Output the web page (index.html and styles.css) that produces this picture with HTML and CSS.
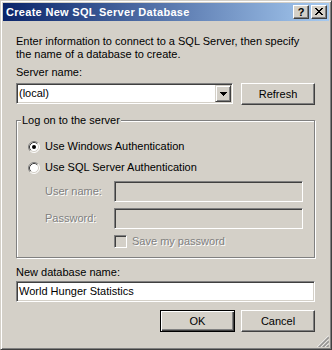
FILE: index.html
```html
<!DOCTYPE html>
<html>
<head>
<meta charset="utf-8">
<link rel="stylesheet" href="styles.css">
</head>
<body>
<div class="window">
  <div class="titlebar">
    <div class="title">Create New SQL Server Database</div>
    <div class="tbtns">
      <div class="tbtn help">?</div>
      <div class="tbtn">
        <svg width="8" height="7" viewBox="0 0 8 7" shape-rendering="crispEdges"><path d="M0 0h2v1h-2zM6 0h2v1h-2zM1 1h2v1h-2zM5 1h2v1h-2zM2 2h4v1h-4zM3 3h2v1h-2zM2 4h4v1h-4zM1 5h2v1h-2zM5 5h2v1h-2zM0 6h2v1h-2zM6 6h2v1h-2z" fill="#000"/></svg>
      </div>
    </div>
  </div>
  <div class="content">
    <p class="intro">Enter information to connect to a SQL Server, then specify the name of a database to create.</p>
    <div class="label">Server name:</div>
    <div class="server-row">
      <div class="combo">
        <div class="combo-text">(local)</div>
        <div class="drop-btn">
          <svg width="7" height="4" viewBox="0 0 7 4" shape-rendering="crispEdges"><path d="M0 0h7v1h-7zM1 1h5v1h-5zM2 2h3v1h-3zM3 3h1v1h-1z" fill="#000"/></svg>
        </div>
      </div>
      <div class="btn refresh">Refresh</div>
    </div>
    <fieldset class="group">
      <legend class="legend">Log on to the server</legend>
      <div class="radio-row first">
        <svg class="radio" width="12" height="12" viewBox="0 0 12 12">
          <circle cx="6" cy="6" r="5" fill="#fff"/>
          <path d="M2.11 9.89A5.5 5.5 0 0 1 9.89 2.11" fill="none" stroke="#808080"/>
          <path d="M9.89 2.11A5.5 5.5 0 0 1 2.11 9.89" fill="none" stroke="#fff"/>
          <path d="M2.82 9.18A4.5 4.5 0 0 1 9.18 2.82" fill="none" stroke="#404040"/>
          <path d="M9.18 2.82A4.5 4.5 0 0 1 2.82 9.18" fill="none" stroke="#D4D0C8"/>
          <circle cx="6" cy="6" r="2" fill="#000"/>
        </svg>
        <span>Use Windows Authentication</span>
      </div>
      <div class="radio-row second">
        <svg class="radio" width="12" height="12" viewBox="0 0 12 12">
          <circle cx="6" cy="6" r="5" fill="#fff"/>
          <path d="M2.11 9.89A5.5 5.5 0 0 1 9.89 2.11" fill="none" stroke="#808080"/>
          <path d="M9.89 2.11A5.5 5.5 0 0 1 2.11 9.89" fill="none" stroke="#fff"/>
          <path d="M2.82 9.18A4.5 4.5 0 0 1 9.18 2.82" fill="none" stroke="#404040"/>
          <path d="M9.18 2.82A4.5 4.5 0 0 1 2.82 9.18" fill="none" stroke="#D4D0C8"/>
        </svg>
        <span>Use SQL Server Authentication</span>
      </div>
      <div class="field-row user">
        <div class="field-label disabled">User name:</div>
        <div class="textbox disabled-box"></div>
      </div>
      <div class="field-row pass">
        <div class="field-label disabled">Password:</div>
        <div class="textbox disabled-box"></div>
      </div>
      <div class="check-row">
        <div class="checkbox"></div>
        <span class="disabled">Save my password</span>
      </div>
    </fieldset>
    <div class="label db-label">New database name:</div>
    <div class="textbox db-input">World Hunger Statistics</div>
    <div class="button-row">
      <div class="btn default">OK</div>
      <div class="btn cancel">Cancel</div>
    </div>
  </div>
  <svg class="grip" width="12" height="12" viewBox="0 0 12 12">
    <path d="M0.5 12L12 0.5M4.5 12L12 4.5M8.5 12L12 8.5" stroke="#fff" fill="none"/>
    <path d="M1.5 12L12 1.5M2.5 12L12 2.5M5.5 12L12 5.5M6.5 12L12 6.5M9.5 12L12 9.5M10.5 12L12 10.5" stroke="#808080" fill="none"/>
  </svg>
</div>
</body>
</html>
```

FILE: styles.css
```css
html, body {
  margin: 0;
  padding: 0;
  background: #D4D0C8;
}

.window {
  position: relative;
  width: 332px;
  height: 350px;
  box-sizing: border-box;
  background: #D4D0C8;
  border: 1px solid;
  border-color: #D4D0C8 #404040 #404040 #D4D0C8;
  box-shadow: inset 1px 1px #fff, inset -1px -1px #808080;
  padding: 2px;
  font-family: "Liberation Sans", Arial, sans-serif;
  font-size: 11px;
  color: #000;
}

.titlebar {
  height: 18px;
  display: flex;
  align-items: center;
  padding: 0 2px 0 3px;
  background: linear-gradient(to right, #0A246A, #A6CAF0);
  color: #fff;
  font-weight: bold;
}

.title {
  flex: 1;
  line-height: 18px;
  white-space: nowrap;
  letter-spacing: 0.3px;
}

.tbtns {
  display: flex;
  gap: 2px;
}

.tbtn {
  width: 16px;
  height: 14px;
  box-sizing: border-box;
  background: #D4D0C8;
  border: 1px solid;
  border-color: #fff #404040 #404040 #fff;
  box-shadow: inset -1px -1px #808080;
  display: flex;
  align-items: center;
  justify-content: center;
  color: #000;
  font-weight: bold;
  font-size: 11px;
  line-height: 12px;
}

.tbtn svg {
  display: block;
  margin-top: -1px;
}

.content {
  padding: 14px 14px 0 13px;
}

.intro {
  margin: 0;
  line-height: 13px;
}

.label {
  line-height: 13px;
  margin-top: 5px;
}

.server-row {
  display: flex;
  gap: 8px;
  margin-top: 4px;
}

.combo {
  width: 217px;
  height: 21px;
  box-sizing: border-box;
  background: #fff;
  border: 1px solid;
  border-color: #808080 #fff #fff #808080;
  box-shadow: inset 1px 1px #404040, inset -1px -1px #D4D0C8;
  padding: 1px;
  display: flex;
  align-items: center;
}

.combo-text {
  flex: 1;
  padding-left: 1px;
  line-height: 13px;
}

.drop-btn {
  width: 16px;
  height: 17px;
  box-sizing: border-box;
  background: #D4D0C8;
  border: 1px solid;
  border-color: #D4D0C8 #404040 #404040 #D4D0C8;
  box-shadow: inset 1px 1px #fff, inset -1px -1px #808080;
  display: flex;
  align-items: center;
  justify-content: center;
}

.drop-btn svg {
  display: block;
}

.btn {
  height: 22px;
  box-sizing: border-box;
  background: #D4D0C8;
  border: 1px solid;
  border-color: #fff #404040 #404040 #fff;
  box-shadow: inset -1px -1px #808080;
  display: flex;
  align-items: center;
  justify-content: center;
  line-height: 13px;
}

.refresh {
  width: 74px;
}

.group {
  margin: 9px 0 0;
  padding: 0 11px 9px;
  border: 1px solid #808080;
  box-shadow: inset 1px 1px #fff, 1px 1px #fff;
  min-width: 0;
}

.legend {
  margin-left: -7px;
  padding: 0 1px;
  line-height: 13px;
  background: #D4D0C8;
}

.radio-row {
  display: flex;
  align-items: center;
  gap: 5px;
  height: 13px;
  line-height: 13px;
}

.radio-row.first {
  margin-top: 13px;
}

.radio-row.second {
  margin-top: 8px;
}

.radio {
  display: block;
  flex: none;
}

.field-row {
  display: flex;
  align-items: center;
}

.field-row.user {
  margin-top: 7px;
}

.field-row.pass {
  margin-top: 6px;
}

.field-label {
  width: 86px;
  padding-left: 17px;
  box-sizing: border-box;
  line-height: 13px;
  white-space: nowrap;
  flex: none;
}

.disabled {
  color: #808080;
  text-shadow: 1px 1px 0 #fff;
}

.textbox {
  height: 21px;
  box-sizing: border-box;
  background: #fff;
  border: 1px solid;
  border-color: #808080 #fff #fff #808080;
  box-shadow: inset 1px 1px #404040, inset -1px -1px #D4D0C8;
  padding: 1px 2px;
  line-height: 17px;
}

.field-row .textbox {
  flex: 1;
}

.disabled-box {
  background: #D4D0C8;
}

.check-row {
  display: flex;
  align-items: center;
  gap: 5px;
  margin-top: 6px;
  padding-left: 86px;
  height: 13px;
  line-height: 13px;
}

.checkbox {
  width: 13px;
  height: 13px;
  box-sizing: border-box;
  background: #D4D0C8;
  border: 1px solid;
  border-color: #808080 #fff #fff #808080;
  box-shadow: inset 1px 1px #404040, inset -1px -1px #D4D0C8;
  flex: none;
}

.db-label {
  margin-top: 8px;
}

.db-input {
  margin-top: 2px;
}

.button-row {
  display: flex;
  justify-content: flex-end;
  gap: 6px;
  margin-top: 8px;
}

.btn.default {
  width: 75px;
  border: 1px solid #000;
  box-shadow: inset 1px 1px #fff, inset -1px -1px #404040, inset -2px -2px #808080;
}

.btn.cancel {
  width: 74px;
}

.grip {
  position: absolute;
  right: 2px;
  bottom: 2px;
  display: block;
}
```
